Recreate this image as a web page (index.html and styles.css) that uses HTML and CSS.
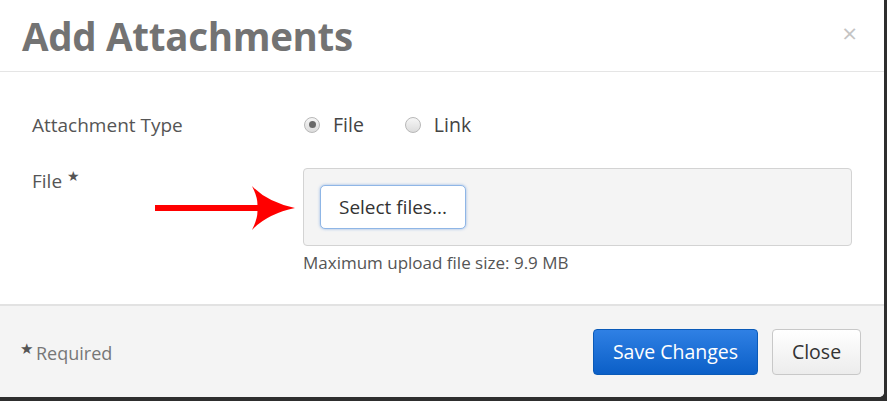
FILE: index.html
```html
<!DOCTYPE html>
<html lang="en">
<head>
    <meta charset="UTF-8">
    <title>Add Attachments</title>
    <link rel="stylesheet" href="styles.css">
</head>
<body>
    <div class="modal">
        <div class="modal-header">
            <h1>Add Attachments</h1>
            <span class="close-x">&times;</span>
        </div>

        <div class="modal-body">
            <div class="form-row">
                <label class="field-label">Attachment Type</label>
                <div class="radio-group">
                    <label class="radio"><span class="radio-dot checked"></span>File</label>
                    <label class="radio"><span class="radio-dot"></span>Link</label>
                </div>
            </div>

            <div class="form-row file-row">
                <label class="field-label">File <span class="star">&#9733;</span></label>
                <div class="upload">
                    <div class="dropzone">
                        <button class="select-btn">Select files...</button>
                    </div>
                    <p class="hint">Maximum upload file size: 9.9 MB</p>
                </div>

                <!-- annotation arrow -->
                <svg class="arrow" width="145" height="48" viewBox="0 0 145 48">
                    <rect x="0" y="19" width="104" height="6" fill="#ff0000"/>
                    <path d="M97 0 Q112 16 140 22 Q112 28 97 44 Q104 30 102 22 Q104 14 97 0 Z" fill="#ff0000"/>
                </svg>
            </div>
        </div>

        <div class="modal-footer">
            <span class="required"><span class="star">&#9733;</span>Required</span>
            <div class="actions">
                <button class="btn btn-primary">Save Changes</button>
                <button class="btn btn-default">Close</button>
            </div>
        </div>
    </div>
</body>
</html>
```

FILE: styles.css
```css
:root {
    --text: #555555;
    --muted: #777777;
    --border: #e5e5e5;
    --panel: #f4f4f4;
    --primary: #1b6fd6;
}

body {
    margin: 0;
    background: #2e2e2e;
    font-family: 'Open Sans', 'Noto Sans', sans-serif;
    color: var(--text);
}

.modal {
    width: 884px;
    height: 397px;
    background: #ffffff;
    border-bottom-right-radius: 5px;
    display: flex;
    flex-direction: column;
    overflow: hidden;
}

.modal-header {
    height: 72px;
    flex-shrink: 0;
    border-bottom: 1px solid var(--border);
    display: flex;
    align-items: center;
    justify-content: space-between;
    padding: 0 27px 0 22px;
    box-sizing: border-box;
}

.modal-header h1 {
    margin: 0;
    font-size: 38.5px;
    font-weight: 700;
    color: #737373;
    letter-spacing: -0.3px;
}

.close-x {
    font-size: 26px;
    color: #c4c4c4;
    line-height: 1;
    margin-bottom: 5px;
}

.modal-body {
    flex: 1;
    padding: 39px 32px 0 32px;
}

.form-row {
    display: grid;
    grid-template-columns: 271px 1fr;
    align-items: center;
}

.field-label {
    font-size: 19px;
    color: #555;
}

.radio-group {
    display: flex;
    gap: 41px;
    padding-left: 1px;
}

.radio {
    display: flex;
    align-items: center;
    gap: 13px;
    font-size: 19.5px;
    color: #444;
}

.radio-dot {
    width: 16px;
    height: 16px;
    border-radius: 50%;
    border: 1px solid #b8b8b8;
    background: linear-gradient(#f6f6f6, #dcdcdc);
    box-sizing: border-box;
    position: relative;
}

.radio-dot.checked::after {
    content: "";
    position: absolute;
    left: 3.5px;
    top: 3.5px;
    width: 7px;
    height: 7px;
    border-radius: 50%;
    background: #6a6a6a;
}

.file-row {
    margin-top: 30px;
    align-items: start;
    position: relative;
}

.file-row .field-label {
    margin-top: 0;
}

.star {
    font-size: 14px;
    color: #555;
    position: relative;
    top: -7px;
}

.dropzone {
    height: 78px;
    background: var(--panel);
    border: 1px solid #d3d3d3;
    border-radius: 4px;
    box-sizing: border-box;
    padding: 16px 0 0 16px;
}

.select-btn {
    width: 146px;
    height: 44px;
    background: #fff;
    border: 1px solid #8fb6e6;
    border-radius: 5px;
    box-shadow: 0 0 3px rgba(80, 140, 220, 0.6);
    font-family: inherit;
    font-size: 19px;
    color: #333;
}

.hint {
    margin: 5px 0 0 0;
    font-size: 17px;
    color: #555;
}

.arrow {
    position: absolute;
    left: 123px;
    top: 18px;
}

.modal-footer {
    height: 91px;
    flex-shrink: 0;
    border-top: 2px solid #e2e2e2;
    background: var(--panel);
    display: flex;
    align-items: center;
    justify-content: space-between;
    padding: 0 23px 0 20px;
}

.required {
    font-size: 18px;
    color: var(--muted);
    margin-top: 2px;
}

.required .star {
    font-size: 15px;
    top: -6px;
    margin-right: 3px;
}

.actions {
    display: flex;
    gap: 14px;
}

.btn {
    height: 46px;
    border-radius: 4px;
    font-family: inherit;
    font-size: 19.5px;
    padding: 0;
}

.btn-primary {
    width: 165px;
    color: #fff;
    border: 1px solid #0a5ab8;
    background: linear-gradient(#2f80e4, #0b5fc7);
}

.btn-default {
    width: 89px;
    color: #333;
    border: 1px solid #c8c8c8;
    background: linear-gradient(#ffffff, #ececec);
}
```
